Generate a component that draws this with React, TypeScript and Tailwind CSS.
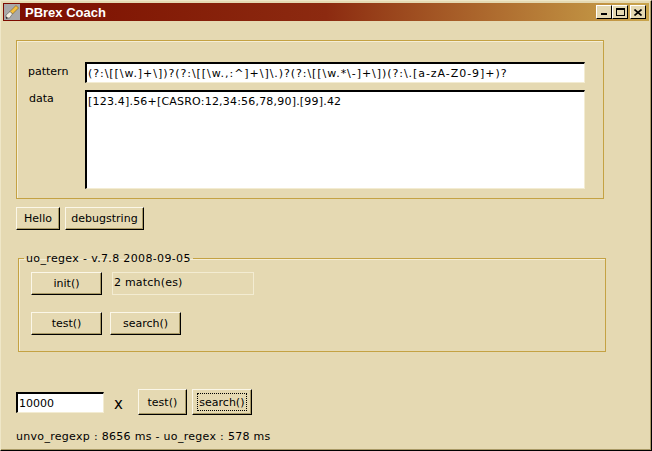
import React from "react";

const font = { fontFamily: '"DejaVu Sans", Verdana, sans-serif' };

const btn =
  "h-[23px] px-[4px] text-[11px] text-black bg-[#e5d9b2] border-t border-l border-t-[#fbf7e8] border-l-[#fbf7e8] border-b border-r border-b-black border-r-black shadow-[inset_-1px_-1px_0_#a99a66] leading-none whitespace-nowrap";

const sunken =
  "bg-white border-t-2 border-l-2 border-t-black border-l-black border-b border-r border-b-[#f3ecd2] border-r-[#f3ecd2] text-[11px] text-black";

const App = () => {
  return (
    <div
      style={font}
      className="w-[652px] h-[451px] bg-[#e5d9b2] border border-t-[#efe7c8] border-l-[#efe7c8] border-b-black border-r-black shadow-[inset_-1px_-1px_0_#a99a66] p-[2px] flex flex-col overflow-hidden"
    >
      {/* title bar */}
      <div className="h-[18px] bg-gradient-to-r from-[#7c0a00] via-[#8c2a10] to-[#c9a54c] flex items-center pl-[1px] pr-[3px]">
        <svg width="16" height="16" viewBox="0 0 16 16">
          <rect x="0" y="0" width="16" height="16" fill="#a9a9a9" />
          <path d="M12 1.5 L14.5 4 L8.5 10 L6 7.5 Z" fill="#f4c040" stroke="#7a5a10" strokeWidth="0.6" />
          <path d="M6 7.5 L8.5 10 L5.5 14 L2 14 L2 11 Z" fill="#f6f0e0" stroke="#555" strokeWidth="0.6" />
          <path d="M2 12.5 L4 14 L2 15 Z" fill="#333" />
        </svg>
        <span
          style={{ fontFamily: '"Liberation Sans", Arial, sans-serif' }}
          className="ml-[5px] text-white font-bold text-[13px] leading-none"
        >
          PBrex Coach
        </span>
        <div className="ml-auto flex items-center">
          <div className="w-[16px] h-[14px] flex items-end justify-center pb-[3px] bg-[#e5d9b2] border-t border-l border-t-white border-l-white border-b border-r border-b-black border-r-black">
            <div className="w-[6px] h-[2px] bg-black" />
          </div>
          <div className="w-[16px] h-[14px] flex items-center justify-center bg-[#e5d9b2] border-t border-l border-t-white border-l-white border-b border-r border-b-black border-r-black">
            <div className="w-[9px] h-[8px] border border-black border-t-2" />
          </div>
          <div className="ml-[2px] w-[16px] h-[14px] flex items-center justify-center bg-[#e5d9b2] border-t border-l border-t-white border-l-white border-b border-r border-b-black border-r-black">
            <svg width="8" height="7" viewBox="0 0 8 7">
              <path d="M0.5 0.5 L7.5 6.5 M7.5 0.5 L0.5 6.5" stroke="black" strokeWidth="1.6" />
            </svg>
          </div>
        </div>
      </div>

      {/* first group */}
      <div className="ml-[13px] mt-[19px] w-[588px] h-[159px] border border-[#c4a243] shadow-[inset_1px_1px_0_#f5eed6] pt-[21px] pl-[11px]">
        <div className="flex items-start">
          <span className="w-[57px] text-[11px] text-black leading-none mt-[4px]">pattern</span>
          <div className={"w-[500px] h-[21px] pl-[1px] pt-[4px] leading-none whitespace-nowrap overflow-hidden tracking-[0.95px] " + sunken}>
            (?:\[[\w.]+\])?(?:\[[\w.,:^]+\]\.)?(?:\[[\w.*\-]+\])(?:\.[a-zA-Z0-9]+)?
          </div>
        </div>
        <div className="flex items-start mt-[7px]">
          <span className="w-[57px] pl-[1px] text-[11px] text-black leading-none mt-[3px]">data</span>
          <div className={"w-[500px] h-[99px] pl-[1px] pt-[4px] leading-none tracking-[0.2px] " + sunken}>
            [123.4].56+[CASRO:12,34:56,78,90].[99].42
          </div>
        </div>
      </div>

      {/* hello row */}
      <div className="ml-[13px] mt-[8px] flex gap-[5px]">
        <button className={btn + " w-[44px]"}>Hello</button>
        <button className={btn + " w-[79px]"}>debugstring</button>
      </div>

      {/* uo_regex group */}
      <fieldset className="ml-[15px] mt-[23px] w-[588px] h-[99px] border border-[#c4a243] shadow-[inset_1px_1px_0_#f5eed6] p-0">
        <legend className="ml-[5px] px-[2px] text-[11px] tracking-[0.35px] text-black leading-none">uo_regex - v.7.8 2008-09-05</legend>
        <div className="pl-[12px]">
          <div className="flex items-start mt-[8px]">
            <button className={btn + " w-[71px]"}>init()</button>
            <div className="ml-[10px] w-[142px] h-[23px] border border-[#f3ecd2] text-[11px] tracking-[0.2px] text-black leading-none pl-[1px] pt-[4px]">
              2 match(es)
            </div>
          </div>
          <div className="flex items-start mt-[17px] gap-[8px]">
            <button className={btn + " w-[71px]"}>test()</button>
            <button className={btn + " w-[71px]"}>search()</button>
          </div>
        </div>
      </fieldset>

      {/* bottom row */}
      <div className="ml-[13px] mt-[37px] flex items-center">
        <div className={"w-[88px] h-[21px] pl-[1px] pt-[4px] leading-none border-t-[#9b7d24] border-l-[#9b7d24] " + sunken}>
          10000
        </div>
        <span className="ml-[10px] text-[15px] text-black leading-none mt-[4px]">x</span>
        <button className={btn + " ml-[15px] w-[49px] h-[26px]"}>test()</button>
        <button className={btn + " ml-[5px] w-[60px] h-[26px] p-[3px]"}>
          <span className="block w-full h-full border border-dotted border-black leading-[17px]">search()</span>
        </button>
      </div>

      <div className="ml-[13px] mt-[16px] text-[11px] tracking-[0.3px] text-black leading-none">
        unvo_regexp : 8656 ms - uo_regex : 578 ms
      </div>
    </div>
  );
};

export default App;
